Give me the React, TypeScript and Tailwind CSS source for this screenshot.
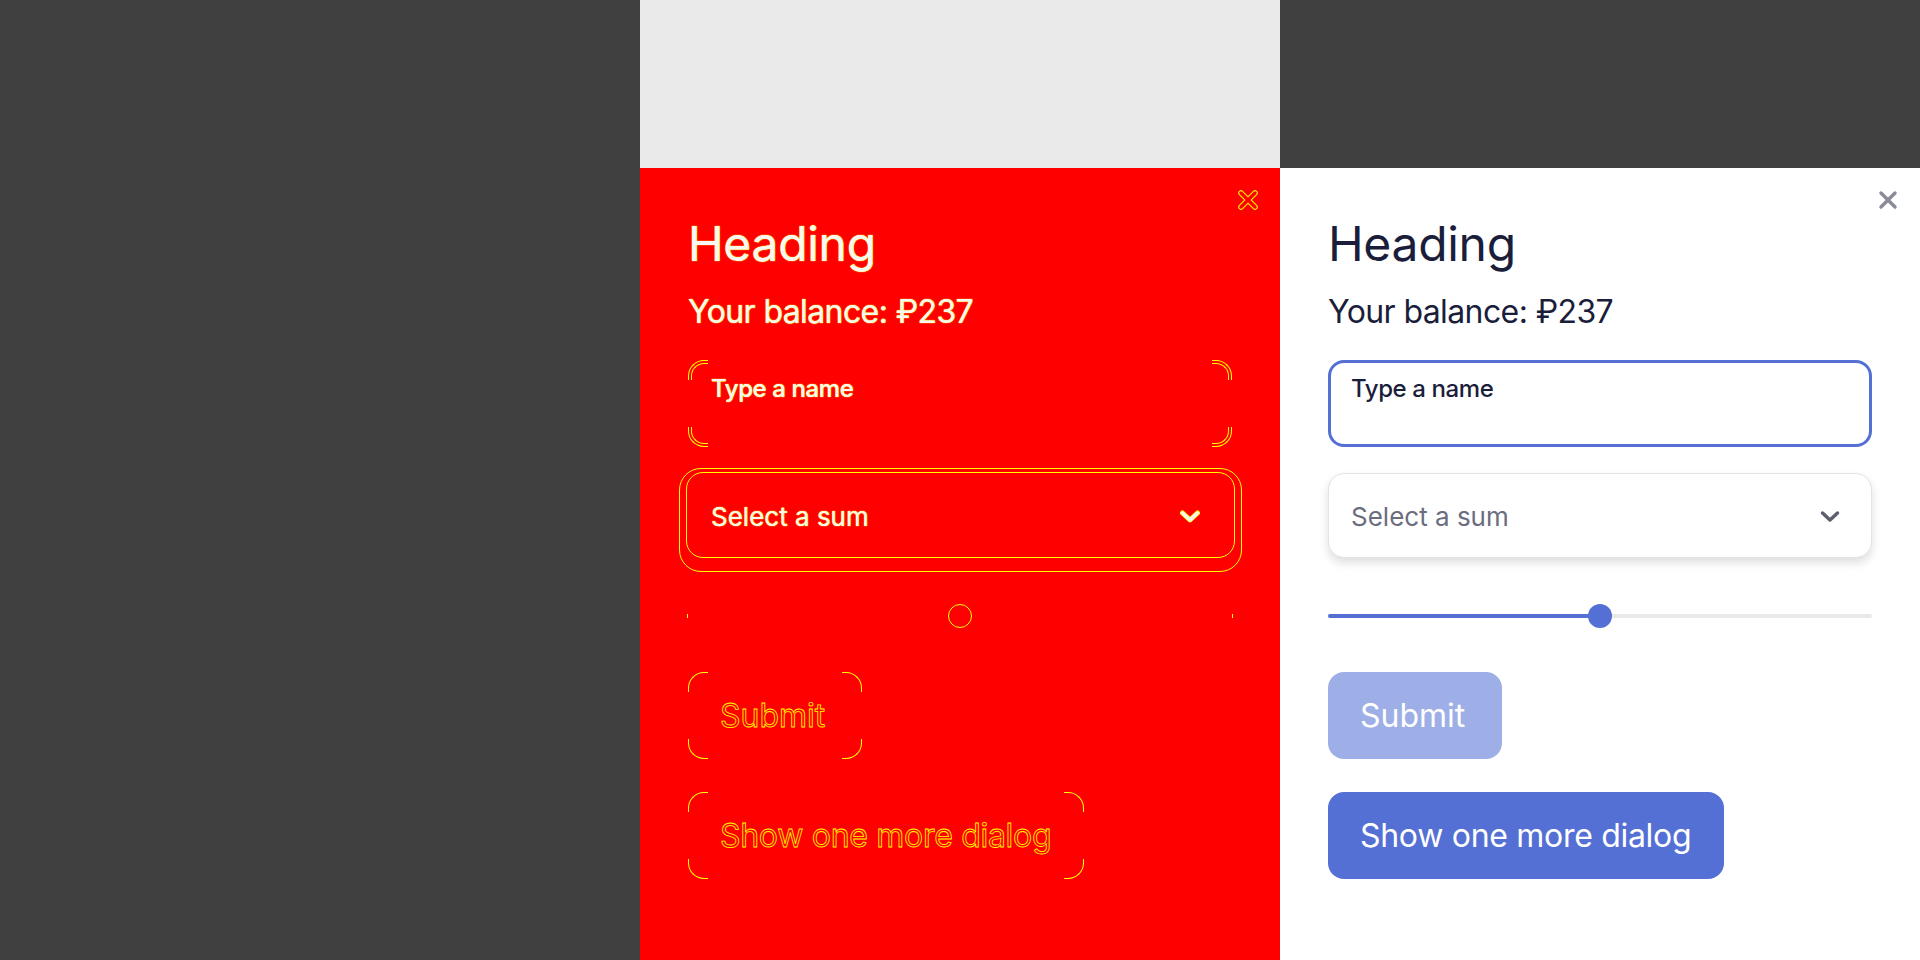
import React from "react";

const YEL = "#ffff00";

function XIcon({ diff }: { diff?: boolean }) {
  return (
    <svg width="20" height="20" viewBox="0 0 20 20" fill="none">
      {diff ? (
        <>
          <path d="M3 3L17 17M17 3L3 17" stroke={YEL} strokeWidth="5.5" strokeLinecap="round" />
          <path d="M3 3L17 17M17 3L3 17" stroke="#ff0000" strokeWidth="3.5" strokeLinecap="round" />
        </>
      ) : (
        <path d="M3 3L17 17M17 3L3 17" stroke="#8a8c99" strokeWidth="3.5" strokeLinecap="round" />
      )}
    </svg>
  );
}

function Chevron({ diff }: { diff?: boolean }) {
  return (
    <svg width="22" height="13" viewBox="0 0 22 13" fill="none">
      {diff ? (
        <>
          <path d="M3.5 3L11 10L18.5 3" stroke={YEL} strokeWidth="5" strokeLinecap="round" strokeLinejoin="round" />
          <path d="M3.5 3L11 10L18.5 3" stroke="#f7f7f4" strokeWidth="3.5" strokeLinecap="round" strokeLinejoin="round" />
        </>
      ) : (
        <path d="M3.5 3L11 10L18.5 3" stroke="#5d5f6e" strokeWidth="3.5" strokeLinecap="round" strokeLinejoin="round" />
      )}
    </svg>
  );
}

function Corners({ inner }: { inner?: boolean }) {
  return (
    <>
      <div className="absolute left-0 top-0 w-[20px] h-[20px] border-l border-t border-[#ffff00] rounded-tl-[16px]" />
      <div className="absolute right-0 top-0 w-[20px] h-[20px] border-r border-t border-[#ffff00] rounded-tr-[16px]" />
      <div className="absolute left-0 bottom-0 w-[20px] h-[20px] border-l border-b border-[#ffff00] rounded-bl-[16px]" />
      <div className="absolute right-0 bottom-0 w-[20px] h-[20px] border-r border-b border-[#ffff00] rounded-br-[16px]" />
      {inner && (
        <>
          <div className="absolute left-[3px] top-[3px] w-[17px] h-[17px] border-l border-t border-[#ffff00] rounded-tl-[13px]" />
          <div className="absolute right-[3px] top-[3px] w-[17px] h-[17px] border-r border-t border-[#ffff00] rounded-tr-[13px]" />
          <div className="absolute left-[3px] bottom-[3px] w-[17px] h-[17px] border-l border-b border-[#ffff00] rounded-bl-[13px]" />
          <div className="absolute right-[3px] bottom-[3px] w-[17px] h-[17px] border-r border-b border-[#ffff00] rounded-br-[13px]" />
        </>
      )}
    </>
  );
}

function Dialog({ diff }: { diff?: boolean }) {
  const solid = "text-[#f7f7f4] [text-shadow:0_0_1px_#ffff00,0_0_1px_#ffff00]";
  const outlineText = "text-transparent [-webkit-text-stroke:0.8px_#ffff00]";
  return (
    <div className={diff ? "relative flex-1 bg-[#ff0000] px-[48px] pt-[52px]" : "relative flex-1 bg-white px-[48px] pt-[52px]"}>
      <div className="absolute right-[22px] top-[22px]">
        <XIcon diff={diff} />
      </div>
      <h1 className={diff ? `h-[48px] text-[48px] leading-[48px] font-normal tracking-[-0.3px] ${solid}` : "h-[48px] text-[48px] leading-[48px] font-normal tracking-[-0.3px] text-[#1b1e3b]"}>
        Heading
      </h1>
      <p className={diff ? `mt-[28px] h-[32px] text-[32px] leading-[32px] tracking-[-0.6px] ${solid}` : "mt-[28px] h-[32px] text-[32px] leading-[32px] tracking-[-0.6px] text-[#1b1e3b]"}>
        Your balance: ₽237
      </p>

      {/* input */}
      <div
        className={
          diff
            ? "relative mt-[32px] h-[87px] rounded-[16px] pl-[23px] pt-[17px]"
            : "relative mt-[32px] h-[87px] rounded-[16px] border-[3px] border-[#5470d4] pl-[20px] pt-[14px]"
        }
      >
        {diff && <Corners inner />}
        <span className={diff ? `text-[24px] leading-[24px] font-medium tracking-[-0.4px] ${solid}` : "text-[24px] leading-[24px] font-medium tracking-[-0.4px] text-[#1b1e3b]"}>
          Type a name
        </span>
      </div>

      {/* select */}
      <div
        className={
          diff
            ? "relative mt-[26px] flex h-[85px] items-center justify-between rounded-[16px] pl-[23px] pr-[31px] pt-[2px]"
            : "relative mt-[26px] flex h-[85px] items-center justify-between rounded-[16px] border border-[#e3e3e6] bg-white pl-[22px] pr-[30px] pt-[2px] shadow-[0_5px_10px_rgba(0,0,0,0.13)]"
        }
      >
        {diff && (
          <>
            <div className="absolute left-[-9px] right-[-10px] top-[-5px] bottom-[-14px] rounded-[22px] border border-[#ffff00]" />
            <div className="absolute left-[-2px] right-[-3px] top-[-1px] bottom-0 rounded-[17px] border border-[#ffff00]" />
          </>
        )}
        <span className={diff ? `text-[26px] leading-[26px] ${solid}` : "text-[26px] leading-[26px] text-[#6b6d7e]"}>Select a sum</span>
        <Chevron diff={diff} />
      </div>

      {/* slider */}
      <div className="relative mt-[46px] h-[24px]">
        {diff ? (
          <>
            <div className="absolute left-[-1px] top-[10px] h-[4px] w-[1px] bg-[#ffff00]" />
            <div className="absolute right-[-1px] top-[10px] h-[4px] w-[1px] bg-[#ffff00]" />
            <div className="absolute left-[260px] top-0 h-[24px] w-[24px] rounded-full border border-[#ffff00]" />
          </>
        ) : (
          <>
            <div className="absolute left-0 right-0 top-[10px] h-[4px] rounded-full bg-[#e9e9e9]" />
            <div className="absolute left-0 top-[10px] h-[4px] w-[272px] rounded-full bg-[#5470d4]" />
            <div className="absolute left-[260px] top-0 h-[24px] w-[24px] rounded-full bg-[#5470d4]" />
          </>
        )}
      </div>

      {/* buttons */}
      <div className="mt-[44px] flex flex-col items-start gap-[33px]">
        <div
          className={
            diff
              ? "relative flex h-[87px] w-[174px] items-center rounded-[16px] pl-[32px]"
              : "relative flex h-[87px] w-[174px] items-center rounded-[16px] bg-[#9eaee6] pl-[32px]"
          }
        >
          {diff && <Corners />}
          <span className={diff ? `text-[32px] leading-[32px] ${outlineText}` : "text-[32px] leading-[32px] text-white"}>Submit</span>
        </div>
        <div
          className={
            diff
              ? "relative flex h-[87px] w-[396px] items-center rounded-[16px] pl-[32px]"
              : "relative flex h-[87px] w-[396px] items-center rounded-[16px] bg-[#5470d4] pl-[32px]"
          }
        >
          {diff && <Corners />}
          <span className={diff ? `text-[32px] leading-[32px] tracking-[-0.3px] ${outlineText}` : "text-[32px] leading-[32px] tracking-[-0.3px] text-white"}>
            Show one more dialog
          </span>
        </div>
      </div>
    </div>
  );
}

export default function App() {
  return (
    <div className="flex h-[960px] w-[1920px] overflow-hidden font-['Inter',sans-serif]">
      <div className="w-[640px] bg-[#404040]" />
      <div className="flex w-[640px] flex-col">
        <div className="h-[168px] bg-[#eaeaea]" />
        <Dialog diff />
      </div>
      <div className="flex w-[640px] flex-col">
        <div className="h-[168px] bg-[#404040]" />
        <Dialog />
      </div>
    </div>
  );
}
